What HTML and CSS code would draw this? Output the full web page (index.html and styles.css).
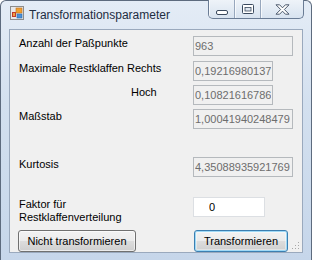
FILE: index.html
```html
<!DOCTYPE html>
<html lang="de">
<head>
<meta charset="UTF-8">
<title>Transformationsparameter</title>
<link rel="stylesheet" href="styles.css">
</head>
<body>

<div class="window">
  <div class="titlebar">
    <svg class="app-icon" width="14" height="14" viewBox="0 0 14 14">
      <rect x="0.5" y="0.5" width="13" height="13" fill="#e8e8e8" stroke="#8c8c8c"/>
      <rect x="2" y="6" width="4" height="5" fill="#c0392b"/>
      <rect x="3" y="7" width="2" height="3" fill="#f0a040"/>
      <rect x="6" y="2" width="6" height="5" fill="#f0a030" stroke="#c07020" stroke-width="0.6"/>
      <rect x="7" y="8" width="5" height="4" fill="#4a90d9" stroke="#2a6cb0" stroke-width="0.6"/>
    </svg>
    <span class="title">Transformationsparameter</span>
    <div class="caption-buttons">
      <span class="cap-btn minimize">
        <svg width="12" height="5" viewBox="0 0 12 5"><rect x="0.5" y="0.5" width="11" height="4" rx="1.5" fill="#fff" stroke="#3b4a5e"/></svg>
      </span>
      <span class="cap-btn maximize">
        <svg width="12" height="10" viewBox="0 0 12 10"><rect x="0.5" y="0.5" width="11" height="9" rx="1" fill="#fff" stroke="#3b4a5e"/><rect x="3" y="3.5" width="6" height="3.5" fill="#dfe6ef" stroke="#3b4a5e" stroke-width="0.8"/></svg>
      </span>
      <span class="cap-btn close">
        <svg width="15" height="11" viewBox="0 0 15 11"><path d="M1 0.8h3.6l2.9 3 2.9-3h3.6l-4.6 4.7 4.6 4.7h-3.6l-2.9-3-2.9 3h-3.6l4.6-4.7z" fill="#fff" stroke="#3b4a5e" stroke-width="0.9" stroke-linejoin="round"/></svg>
      </span>
    </div>
  </div>

  <div class="client">
    <div class="row first">
      <label class="field-label">Anzahl der Paßpunkte</label>
      <input class="textbox wide" type="text" value="963" readonly>
    </div>
    <div class="row">
      <label class="field-label">Maximale Restklaffen Rechts</label>
      <input class="textbox narrow" type="text" value="0,19216980137" readonly>
    </div>
    <div class="row tight">
      <label class="field-label hoch">Hoch</label>
      <input class="textbox narrow" type="text" value="0,10821616786" readonly>
    </div>
    <div class="row tight">
      <label class="field-label">Maßstab</label>
      <input class="textbox wide" type="text" value="1,00041940248479" readonly>
    </div>
    <div class="row kurtosis">
      <label class="field-label">Kurtosis</label>
      <input class="textbox wide" type="text" value="4,35088935921769" readonly>
    </div>
    <div class="row faktor">
      <label class="field-label">Faktor für<br>Restklaffenverteilung</label>
      <input class="textbox edit" type="text" value="0">
    </div>
    <div class="button-row">
      <button type="button" class="win-btn no-transform">Nicht transformieren</button>
      <button type="button" class="win-btn default-btn">Transformieren</button>
      <svg class="grip" width="8" height="8" viewBox="0 0 8 8">
        <rect x="6" y="0" width="1" height="1" fill="#a8a8a8"/>
        <rect x="3" y="3" width="1" height="1" fill="#a8a8a8"/>
        <rect x="6" y="3" width="1" height="1" fill="#a8a8a8"/>
        <rect x="0" y="6" width="1" height="1" fill="#a8a8a8"/>
        <rect x="3" y="6" width="1" height="1" fill="#a8a8a8"/>
        <rect x="6" y="6" width="1" height="1" fill="#a8a8a8"/>
      </svg>
    </div>
  </div>
</div>

</body>
</html>
```

FILE: styles.css
```css
body {
  margin: 0;
  background: #fff;
  font-family: 'Liberation Sans', Arial, sans-serif;
  font-size: 11px;
  color: #000;
}

.window {
  width: 312px;
  height: 260px;
  box-sizing: border-box;
  padding: 0 8px 7px 8px;
  background: linear-gradient(to bottom, #e4ecf6 0%, #d3e0ef 40%, #c6d6ea 100%);
  border-left: 1px solid #5d6b7e;
  border-right: 1px solid #5d6b7e;
  border-top: 1px solid #5d6b7e;
  border-radius: 6px 6px 0 0;
  display: flex;
  flex-direction: column;
}

.titlebar {
  height: 28px;
  display: flex;
  align-items: flex-start;
  margin-left: -1px;
  margin-right: -1px;
}
.app-icon {
  margin-top: 5px;
  margin-left: 2px;
}
.title {
  margin-top: 7px;
  margin-left: 5px;
  font-size: 12px;
  color: #1e2d42;
}

.caption-buttons {
  margin-left: auto;
  margin-top: -1px;
  display: flex;
  height: 18px;
  border: 1px solid #6a7c95;
  border-top: none;
  border-radius: 0 0 5px 5px;
  background: linear-gradient(to bottom, #eef3f9, #d8e3f0);
  overflow: hidden;
}
.cap-btn {
  display: flex;
  align-items: center;
  justify-content: center;
  width: 25px;
  border-right: 1px solid #97a7bd;
  box-shadow: inset 1px 0 0 rgba(255,255,255,0.7);
}
.cap-btn.minimize svg {
  margin-top: 6px;
}
.cap-btn.close {
  width: 42px;
  border-right: none;
}

.client {
  flex: 1;
  background: #f0f0f0;
  border: 1px solid #9aa9bd;
  padding-top: 6px;
  display: flex;
  flex-direction: column;
}

.row {
  display: flex;
  height: 20px;
  margin-top: 5px;
}
.row.first {
  margin-top: 0;
}
.row.tight {
  margin-top: 4px;
}
.row.kurtosis {
  margin-top: 28px;
}
.row.faktor {
  margin-top: 20px;
}

.field-label {
  width: 174px;
  padding-left: 9px;
  padding-top: 1px;
  line-height: 13px;
  white-space: nowrap;
  box-sizing: border-box;
  flex-shrink: 0;
}
.field-label.hoch {
  padding-left: 121px;
}

.textbox {
  margin-left: 9px;
  height: 20px;
  box-sizing: border-box;
  border: 1px solid #b5b9bd;
  background: #f0f0f0;
  color: #6d6d6d;
  font-family: 'Liberation Sans', Arial, sans-serif;
  font-size: 11px;
  line-height: 14px;
  padding: 2px 1px;
  outline: none;
}
.textbox.wide {
  width: 100px;
}
.textbox.narrow {
  width: 80px;
}
.textbox.edit {
  width: 72px;
  background: #fff;
  border-color: #dcdfe3;
  color: #000;
  padding-left: 15px;
}

.button-row {
  display: flex;
  align-items: flex-start;
  margin-top: 13px;
  padding-left: 8px;
}
.win-btn {
  height: 22px;
  box-sizing: border-box;
  border: 1px solid #707070;
  border-radius: 3px;
  background: linear-gradient(to bottom, #f2f2f2 0%, #ebebeb 49%, #dddddd 50%, #cfcfcf 100%);
  box-shadow: inset 0 0 0 1px rgba(255,255,255,0.6);
  font-family: 'Liberation Sans', Arial, sans-serif;
  font-size: 11px;
  color: #000;
  padding: 0;
}
.no-transform {
  width: 118px;
}
.default-btn {
  width: 94px;
  margin-left: 58px;
  border-color: #3c7fb1;
  box-shadow: inset 0 0 0 1px #9fd9f6, inset 0 0 0 2px rgba(255,255,255,0.4);
}
.grip {
  margin-left: auto;
  margin-right: 2px;
  margin-top: 12px;
}
```
